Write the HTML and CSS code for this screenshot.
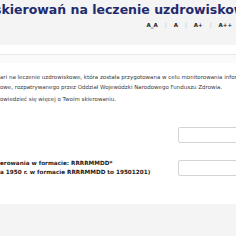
FILE: index.html
```html
<!DOCTYPE html>
<html lang="pl">
<head>
<meta charset="utf-8">
<link rel="stylesheet" href="styles.css">
</head>
<body>
<div class="page">
  <header class="top">
    <h1 class="title">skierowań na leczenie uzdrowiskowe</h1>
    <nav class="sizes">
      <span class="sz">A_A</span><span class="sep">|</span>
      <span class="sz">A</span><span class="sep">|</span>
      <span class="sz">A+</span><span class="sep">|</span>
      <span class="sz">A++</span>
    </nav>
  </header>
  <div class="strip"></div>
  <div class="band"></div>
  <main class="content">
    <p class="intro">ari na leczenie uzdrowiskowe, która została przygotowana w celu monitorowania informacji<br>owe, rozpatrywanego przez Oddział Wojewódzki Narodowego Funduszu Zdrowia.</p>
    <p class="intro second">owiedzieć się więcej o Twoim skierowaniu.</p>
    <div class="row row1">
      <span class="label"></span>
      <span class="field"></span>
    </div>
    <div class="row row2">
      <span class="label">erowania w formacie: RRRRMMDD*<br>a 1950 r. w formacie RRRRMMDD to 19501201)</span>
      <span class="field"></span>
    </div>
  </main>
  <footer class="foot"></footer>
</div>
</body>
</html>
```
FILE: styles.css
```css
html, body {
  margin: 0;
  padding: 0;
  background: #f4f4f4;
  overflow: hidden;
}
.page {
  width: 236px;
  height: 236px;
  overflow: hidden;
  font-family: "DejaVu Sans", Verdana, sans-serif;
  display: flex;
  flex-direction: column;
}
.top {
  background: #f4f4f4;
  height: 45px;
  display: flex;
  flex-direction: column;
}
.title {
  margin: 2px 0 0 -6px;
  font-size: 12.5px;
  line-height: 16px;
  font-weight: bold;
  color: #1f2b6d;
  white-space: nowrap;
}
.sizes {
  margin-top: 4px;
  display: flex;
  justify-content: flex-end;
  gap: 7px;
  padding-right: 4px;
  font-size: 5.5px;
  line-height: 7px;
  font-weight: bold;
  color: #222;
}
.sep {
  color: #a9bad0;
  font-weight: normal;
}
.strip {
  height: 9px;
  background: #fff;
  border-bottom: 1px solid #e8e8e8;
}
.band {
  height: 8px;
  background: #fafafa;
}
.content {
  background: #fff;
  height: 141px;
  display: flex;
  flex-direction: column;
  font-size: 5.5px;
  color: #3a3a3a;
}
.intro {
  margin: 9px 0 0 0;
  line-height: 10px;
  white-space: nowrap;
}
.intro.second {
  margin-top: 2px;
}
.row {
  display: flex;
  justify-content: space-between;
  align-items: center;
}
.row1 {
  margin-top: 23px;
}
.row2 {
  margin-top: 16px;
}
.label {
  font-size: 5.7px;
  font-weight: bold;
  line-height: 9px;
  white-space: nowrap;
  color: #222;
}
.field {
  width: 70px;
  height: 14px;
  border: 1px solid #d4d4d4;
  border-radius: 2px;
  margin-right: -14px;
  background: #fff;
}
.foot {
  flex: 1;
  background: #f4f4f4;
}
```
